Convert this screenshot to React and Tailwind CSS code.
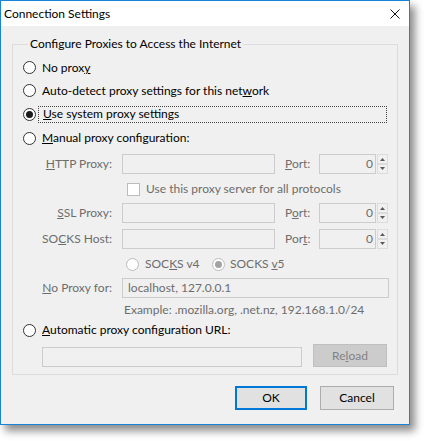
import React from "react";

const Radio = ({ checked = false, disabled = false }) => (
  <span
    className={`flex h-[13px] w-[13px] shrink-0 items-center justify-center rounded-full border bg-white ${
      disabled ? "border-[#bcbcbc]" : "border-[#333333]"
    }`}
  >
    {checked && (
      <span className={`h-[7px] w-[7px] rounded-full ${disabled ? "bg-[#a3a3a3]" : "bg-[#1a1a1a]"}`} />
    )}
  </span>
);

const Spinner = () => (
  <svg width="11" height="20" viewBox="0 0 11 20" className="ml-[1px] shrink-0">
    <rect x="0.5" y="0.5" width="10" height="9" fill="#f0f0f0" stroke="#dcdcdc" />
    <rect x="0.5" y="10.5" width="10" height="9" fill="#f0f0f0" stroke="#dcdcdc" />
    <path d="M3 7h5L5.5 4z" fill="#5a5a5a" />
    <path d="M3 13h5L5.5 16z" fill="#5a5a5a" />
  </svg>
);

const Box = ({ className = "", children }) => (
  <div className={`flex h-[20px] items-center border border-[#cccccc] bg-[#f0f0f0] text-[#6d6d6d] ${className}`}>
    {children}
  </div>
);

const HostRow = ({ label, port, className = "" }) => (
  <div className={`flex h-[20px] items-center ${className}`}>
    <span className="w-[89px] text-right text-[#6d6d6d]">{label}</span>
    <Box className="ml-[10px] w-[153px]" />
    <span className="ml-[10px] w-[34px] text-[#6d6d6d]">{port}</span>
    <Box className="w-[57px] justify-end pr-[2px]">0</Box>
    <Spinner />
  </div>
);

export default function App() {
  return (
    <div className="h-[441px] w-[426px] bg-white font-[Lato,'Noto_Sans',sans-serif] text-[12px] leading-[16px] text-black">
      <div className="flex h-[425px] w-[410px] flex-col border border-[#1883d7] bg-[#f0f0f0] shadow-[5px_6px_8px_rgba(0,0,0,0.45)]">
        <div className="flex h-[25px] shrink-0 items-center justify-between bg-white pl-[3px] pr-[9px]">
          <span>Connection Settings</span>
          <svg width="10" height="10" viewBox="0 0 10 10">
            <path d="M0.5 0.5l9 9M9.5 0.5l-9 9" stroke="#111" strokeWidth="1" />
          </svg>
        </div>

        <fieldset className="mx-[11px] mt-[10px] border border-[#dcdcdc] pb-[7px] pl-[10px] pt-[4px]">
          <legend className="ml-[5px] px-[2px] leading-[16px]">Configure Proxies to Access the Internet</legend>

          <div className="flex h-[23px] items-center gap-[6px]">
            <Radio />
            <span>
              No prox<span className="underline">y</span>
            </span>
          </div>
          <div className="flex h-[23px] items-center gap-[6px]">
            <Radio />
            <span>
              Auto-detect proxy settings for this net<span className="underline">w</span>ork
            </span>
          </div>
          <div className="flex h-[24px] items-center">
            <Radio checked />
            <span className="ml-[2px] flex h-[17px] w-[349px] items-center border border-dotted border-[#444] pl-[4px]">
              <span>
                <span className="underline">U</span>se system proxy settings
              </span>
            </span>
          </div>
          <div className="flex h-[24px] items-center gap-[6px]">
            <Radio />
            <span>
              <span className="underline">M</span>anual proxy configuration:
            </span>
          </div>

          <HostRow
            className="mt-[4px]"
            label={
              <>
                <span className="underline">H</span>TTP Proxy:
              </>
            }
            port={
              <>
                <span className="underline">P</span>ort:
              </>
            }
          />

          <div className="mt-[5px] flex h-[20px] items-center gap-[6px] pl-[104px] text-[#6d6d6d]">
            <span className="h-[13px] w-[13px] shrink-0 border border-[#bcbcbc] bg-white" />
            <span>Use this proxy server for all protocols</span>
          </div>

          <HostRow
            className="mt-[4px]"
            label={
              <>
                <span className="underline">S</span>SL Proxy:
              </>
            }
            port={
              <>
                P<span className="underline">o</span>rt:
              </>
            }
          />
          <HostRow
            className="mt-[6px]"
            label={
              <>
                SO<span className="underline">C</span>KS Host:
              </>
            }
            port={
              <>
                Por<span className="underline">t</span>:
              </>
            }
          />

          <div className="mt-[5px] flex h-[20px] items-center pl-[103px] text-[#6d6d6d]">
            <Radio disabled />
            <span className="ml-[6px] w-[67px]">
              SOC<span className="underline">K</span>S v4
            </span>
            <Radio checked disabled />
            <span className="ml-[5px]">
              SOCKS <span className="underline">v</span>5
            </span>
          </div>

          <div className="mt-[4px] flex h-[20px] items-center">
            <span className="w-[89px] text-right text-[#6d6d6d]">
              <span className="underline">N</span>o Proxy for:
            </span>
            <Box className="ml-[10px] w-[267px] pl-[5px]">localhost, 127.0.0.1</Box>
          </div>

          <div className="mt-[3px] flex h-[18px] items-center pl-[101px] text-[#6d6d6d]">
            Example: .mozilla.org, .net.nz, 192.168.1.0/24
          </div>

          <div className="mt-[1px] flex h-[20px] items-center gap-[6px]">
            <Radio />
            <span>
              <span className="underline">A</span>utomatic proxy configuration URL:
            </span>
          </div>

          <div className="mt-[4px] flex h-[23px] items-end">
            <Box className="ml-[19px] w-[260px]" />
            <div className="ml-[11px] flex h-[23px] w-[74px] items-center justify-center self-start border border-[#bfbfbf] bg-[#cccccc] text-[#838383]">
              <span>
                Re<span className="underline">l</span>oad
              </span>
            </div>
          </div>
        </fieldset>

        <div className="mt-[11px] flex justify-end gap-[13px] pr-[15px]">
          <button className="flex h-[24px] w-[72px] items-center justify-center border-2 border-[#0078d7] bg-[#e1e1e1]">
            OK
          </button>
          <button className="flex h-[24px] w-[74px] items-center justify-center border border-[#adadad] bg-[#e1e1e1]">
            Cancel
          </button>
        </div>
      </div>
    </div>
  );
}
